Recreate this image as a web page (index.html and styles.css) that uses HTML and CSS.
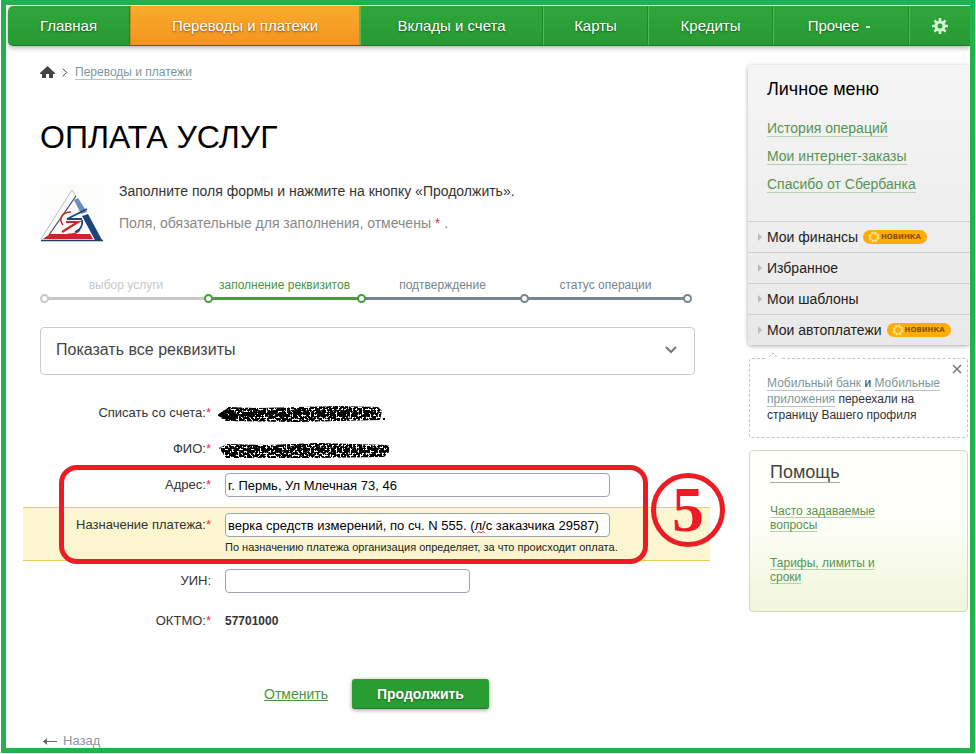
FILE: index.html
```html
<!DOCTYPE html>
<html lang="ru">
<head>
  <meta charset="UTF-8">
  <meta name="viewport" content="width=device-width, initial-scale=1">
  <title>Оплата услуг</title>
  <link rel="stylesheet" href="styles.css">
</head>
<body>
  <div class="frame">

    <nav class="topnav">
      <a href="#">Главная</a>
      <a href="#" class="active">Переводы и платежи</a>
      <a href="#">Вклады и счета</a>
      <a href="#">Карты</a>
      <a href="#">Кредиты</a>
      <a href="#">Прочее <span class="more"></span></a>
      <a href="#" aria-label="Настройки">
        <svg width="16" height="16" viewBox="0 0 16 16">
          <g stroke="#d6f2d4" stroke-width="2.6">
            <path d="M8 0v4M8 12v4M0 8h4M12 8h4M2.4 2.4l2.8 2.8M10.8 10.8l2.8 2.8M13.6 2.4l-2.8 2.8M5.2 10.8l-2.8 2.8"/>
          </g>
          <circle cx="8" cy="8" r="4" fill="none" stroke="#d6f2d4" stroke-width="3"/>
        </svg>
      </a>
    </nav>

    <div class="page">
      <main class="content">
        <div class="inner">
          <div class="crumbs">
            <a href="#" class="home" aria-label="Главная">
              <svg width="15" height="12" viewBox="0 0 15 12"><path fill="#444" d="M7.5 0L15 7v1h-2v4H9V8H6v4H2V8H0V7z"/></svg>
            </a>
            <svg width="6" height="9" viewBox="0 0 6 9"><path d="M.7.5l4 4-4 4" fill="none" stroke="#444"/></svg>
            <a href="#" class="crumb">Переводы и платежи</a>
          </div>

          <h1>ОПЛАТА УСЛУГ</h1>

          <div class="intro">
            <svg class="logo" width="64" height="62" viewBox="0 0 64 62">
              <rect width="64" height="62" fill="#fcfcfa"/>
              <path d="M1 56L32 7l4 6" fill="none" stroke="#aaa" stroke-width=".8"/>
              <path d="M36 13L9 52" fill="none" stroke="#445" stroke-width="1.200"/>
              <path d="M3 56l7-5h40l3 5z" fill="#c9252c"/>
              <path d="M34 17l4-2 9 14-6 2z" fill="#6a8fb8"/>
              <path d="M42 33l6-2 14 26h-7z" fill="#17457c"/>
              <path d="M1 57.500h62" stroke="#1c3c66" stroke-width="1.600"/>
              <path d="M31 29c-9 0-13 7-8 13M28 51c6 1 9-1 12-4" fill="none" stroke="#c9252c" stroke-width="1.500"/>
              <path d="M47 26L27 36h15M42 37c1 6-2 10-7 12" fill="none" stroke="#17457c" stroke-width="1.800"/>
              <path d="M26 39h12L22 49" fill="none" stroke="#c9252c" stroke-width="2.200"/>
            </svg>
            <div>
              <p>Заполните поля формы и нажмите на кнопку «Продолжить».</p>
              <p class="muted">Поля, обязательные для заполнения, отмечены <span class="req">*</span> .</p>
            </div>
          </div>

          <ol class="steps">
            <li class="done">выбор услуги</li>
            <li class="current">заполнение реквизитов</li>
            <li>подтверждение</li>
            <li>статус операции</li>
          </ol>

          <button type="button" class="details">
            <span>Показать все реквизиты</span>
            <svg width="12" height="8" viewBox="0 0 12 8"><path d="M1 1l5 5 5-5" fill="none" stroke="#777" stroke-width="2"/></svg>
          </button>
        </div>

        <form>
          <div class="row">
            <span class="label">Списать со счета:<span class="req">*</span></span>
            <!-- hidden personal data -->
            <svg class="scribble" width="170" height="18" viewBox="0 0 170 18">
              <filter id="noise" x="0" y="0" width="174" height="18" filterUnits="userSpaceOnUse">
                <feTurbulence type="fractalNoise" baseFrequency="0.5" numOctaves="2" seed="4"/>
                <feColorMatrix values="0 0 0 0 0  0 0 0 0 0  0 0 0 0 0  14 0 0 0 -6" result="n"/>
                <feComposite in="n" in2="SourceGraphic" operator="in"/>
              </filter>
              <path filter="url(#noise)" d="M1 9l9-7 30 1 80-2 40 1 4 4-2 9-80 2-74-1-5-3z"/>
              <path d="M3 10l6-4 8 4-8 3zM24 9h12" fill="none" stroke="#000" stroke-width="4"/>
              <path d="M40 9l116-1" fill="none" stroke="#000" stroke-width="6" stroke-dasharray="3 4 1 3 4 2 2 5"/>
              <path d="M165 13h2v2h-2z"/>
            </svg>
          </div>
          <div class="row">
            <span class="label">ФИО:<span class="req">*</span></span>
            <svg class="scribble" width="174" height="18" viewBox="0 0 174 18">
              <path filter="url(#noise)" d="M1 7l8-4 40 1 50-2 72 2v7l-5 5-70 1H8z"/>
              <path d="M10 9h158" fill="none" stroke="#000" stroke-width="5" stroke-dasharray="2 4 3 6 1 3 4 5"/>
            </svg>
          </div>

          <div class="marked">
            <div class="row">
              <label for="address">Адрес:<span class="req">*</span></label>
              <input type="text" id="address" value="г. Пермь, Ул Млечная 73, 46">
            </div>
            <div class="row highlight">
              <label for="purpose">Назначение платежа:<span class="req">*</span></label>
              <div class="field">
                <input type="text" id="purpose" value="верка средств измерений, по сч. N 555. (л/с заказчика 29587)">
                <svg class="typo" width="8" height="3" viewBox="0 0 8 3"><path d="M0 2l2-1.500 2 1.500 2-1.500 2 1.500" fill="none" stroke="#e33"/></svg>
                <p class="hint">По назначению платежа организация определяет, за что происходит оплата.</p>
              </div>
            </div>
            <div class="outline"></div>
            <div class="number">5</div>
          </div>

          <div class="row">
            <label for="uin">УИН:</label>
            <input type="text" id="uin" class="short">
          </div>
          <div class="row last">
            <span class="label">ОКТМО:<span class="req">*</span></span>
            <b class="value">57701000</b>
          </div>

          <div class="actions">
            <a href="#">Отменить</a>
            <button type="submit">Продолжить</button>
          </div>
        </form>

        <a href="#" class="back">
          <svg width="14" height="8" viewBox="0 0 14 8"><path d="M14 4.500H2" stroke="#666"/><path d="M0 4.500l4-3.500v7z" fill="#666"/></svg>
          Назад
        </a>
      </main>

      <aside class="sidebar">
        <section class="menu">
          <h2>Личное меню</h2>
          <ul class="links">
            <li><a href="#">История операций</a></li>
            <li><a href="#">Мои интернет-заказы</a></li>
            <li><a href="#">Спасибо от Сбербанка</a></li>
          </ul>
          <ul class="groups">
            <li><a href="#">Мои финансы</a>
              <span class="new"><svg width="12" height="12" viewBox="0 0 12 12"><circle cx="6" cy="6" r="4.500" fill="none" stroke="#ffe48a" stroke-width="2" stroke-dasharray="2.300 1.200"/><circle cx="6" cy="6" r="3.500" fill="none" stroke="#ffe48a"/></svg>НОВИНКА</span>
            </li>
            <li><a href="#">Избранное</a></li>
            <li><a href="#">Мои шаблоны</a></li>
            <li><a href="#">Мои автоплатежи</a>
              <span class="new"><svg width="12" height="12" viewBox="0 0 12 12"><circle cx="6" cy="6" r="4.500" fill="none" stroke="#ffe48a" stroke-width="2" stroke-dasharray="2.300 1.200"/><circle cx="6" cy="6" r="3.500" fill="none" stroke="#ffe48a"/></svg>НОВИНКА</span>
            </li>
          </ul>
        </section>

        <section class="note">
          <svg class="tip" width="16" height="8" viewBox="0 0 16 8"><path d="M0 7h16" stroke="#fff" stroke-width="2"/><path d="M4 5l4-4 4 4" fill="none" stroke="#c4c4c4" stroke-dasharray="3 1"/></svg>
          <button type="button" class="close" aria-label="Закрыть">
            <svg width="10" height="10" viewBox="0 0 10 10"><path d="M1 1l8 8M9 1L1 9" stroke="#777" stroke-width="1.500"/></svg>
          </button>
          <p><a href="#">Мобильный банк</a> и <a href="#">Мобильные приложения</a> переехали на страницу Вашего профиля</p>
        </section>

        <section class="help">
          <h2><a href="#">Помощь</a></h2>
          <p><a href="#">Часто задаваемые вопросы</a></p>
          <p><a href="#">Тарифы, лимиты и сроки</a></p>
        </section>
      </aside>
    </div>

  </div>
</body>
</html>
```
FILE: styles.css
```css
* {
  box-sizing: border-box;
}

body {
  margin: 0;
  font-family: "Liberation Sans", Arial, sans-serif;
  font-size: 13px;
  color: #333;
  background: #fff;
}

h1, h2, p, ul, ol {
  margin: 0;
  padding: 0;
  font-weight: normal;
}

ul, ol {
  list-style: none;
}

button {
  font-family: inherit;
  cursor: pointer;
}

.frame {
  margin: 0 1px 1px;
  border: 5px solid #22b14c;
  overflow: hidden;
}

/* top navigation */
.topnav {
  display: grid;
  grid-template-columns: 122fr 230fr 183fr 105fr 125fr 136fr 61fr;
  height: 40px;
  margin: 1px 0 0 2px;
  border-radius: 5px 0 0 5px;
  overflow: hidden;
  background: linear-gradient(#2fa63c, #289a33);
  border-bottom: 1px solid #1d7a28;
  box-shadow: 0 2px 5px rgba(0, 0, 0, 0.3);
}

.topnav a {
  display: flex;
  align-items: center;
  justify-content: center;
  color: #fff;
  font-size: 15px;
  text-decoration: none;
  text-shadow: 0 1px 2px rgba(0, 0, 0, 0.5);
  border-left: 1px solid #52b95b;
  border-right: 1px solid #1f8a2c;
}

.topnav a:first-child {
  border-left: none;
}

.topnav a:last-child {
  border-right: none;
}

.topnav .active {
  background: linear-gradient(#f8ab2a, #f49421);
  border-color: #c98a1c;
}

.more {
  width: 4px;
  height: 2px;
  margin: 2px 4px 0 7px;
  background: #d6f2d4;
}

/* columns */
.page {
  display: grid;
  grid-template-columns: 1fr 222px;
  gap: 38px;
  padding-left: 17px;
}

.inner {
  padding: 0 15px 0 17px;
}

.crumbs {
  display: flex;
  align-items: center;
  gap: 7px;
  height: 16px;
  margin-top: 18px;
}

.home {
  display: flex;
}

.crumb {
  color: #7d979b;
  font-size: 12px;
  text-decoration: none;
  border-bottom: 1px solid #b4c3c6;
}

h1 {
  margin-top: 37px;
  font-size: 32px;
  line-height: 40px;
  color: #000;
}

.intro {
  display: flex;
  gap: 15px;
  margin-top: 26px;
  font-size: 14px;
}

.intro p {
  line-height: 16px;
  margin-bottom: 16px;
}

.intro .muted {
  color: #888;
}

.req {
  color: #d9333f;
}

/* payment steps */
.steps {
  display: grid;
  grid-template-columns: 164fr 153fr 163fr 163fr;
  margin: 30px 8px 0 4px;
}

.steps li {
  position: relative;
  height: 23px;
  border-bottom: 3px solid #76858f;
  color: #76858f;
  font-size: 12px;
  line-height: 16px;
  text-align: center;
}

.steps li::before,
.steps li:last-child::after {
  content: "";
  position: absolute;
  left: -4px;
  bottom: -6px;
  width: 5px;
  height: 5px;
  border: 2px solid #76858f;
  border-radius: 50%;
  background: #fff;
}

.steps li:last-child::after {
  left: auto;
  right: -5px;
}

.steps .done {
  color: #c8c8c8;
  border-color: #c8c8c8;
}

.steps .done::before {
  border-color: #c8c8c8;
}

.steps .current {
  color: #4b9440;
  border-color: #4b9a3c;
}

.steps .current::before,
.steps .current + li::before {
  border-color: #4b9a3c;
}

.details {
  display: flex;
  align-items: center;
  justify-content: space-between;
  width: 100%;
  height: 48px;
  margin-top: 27px;
  padding: 0 17px 2px 15px;
  border: 1px solid #ccc;
  border-radius: 4px;
  background: #fff;
  color: #444;
  font-size: 16px;
}

/* form */
form {
  margin-top: 20px;
}

.row {
  display: grid;
  grid-template-columns: 188px 1fr;
  column-gap: 14px;
  align-items: start;
  padding: 6px 0;
}

.row label,
.row .label {
  line-height: 24px;
  text-align: right;
}

.scribble {
  margin: 4px 0 0 -7px;
}

.row input {
  width: 385px;
  height: 24px;
  padding: 0 2px;
  border: 1px solid #9aa5b1;
  border-radius: 4px;
  background: #fff;
  color: #000;
  font-family: inherit;
  font-size: 13px;
}

.row .short {
  width: 245px;
}

.row.last {
  padding-top: 10px;
}

.value {
  font-size: 12px;
  line-height: 24px;
}

.marked {
  position: relative;
}

.highlight {
  margin: 4px 0 2px;
  padding: 5px 0;
  background: #fbf6cf;
  border-top: 1px solid #e6ce5c;
  border-bottom: 1px solid #e6ce5c;
}

.field {
  position: relative;
  width: 385px;
}

.typo {
  position: absolute;
  right: 125px;
  top: 18px;
}

.hint {
  margin-top: 2px;
  color: #222;
  font-size: 11px;
  line-height: 16px;
  white-space: nowrap;
}

.outline {
  position: absolute;
  left: 36px;
  right: 62px;
  top: -2px;
  bottom: -3px;
  border: 5px solid #ed1c24;
  border-radius: 18px;
}

.number {
  position: absolute;
  right: -15px;
  top: 6px;
  width: 74px;
  height: 74px;
  border: 5px solid #ed1c24;
  border-radius: 50%;
  color: #ed1c24;
  font: bold 64px/64px "Liberation Serif", "Times New Roman", serif;
  text-align: center;
}

.actions {
  display: flex;
  align-items: center;
  gap: 24px;
  margin: 40px 0 0 241px;
}

.actions a {
  color: #4b9440;
  font-size: 14px;
}

.actions button {
  width: 137px;
  height: 30px;
  border: none;
  border-bottom: 1px solid #1d7a28;
  border-radius: 3px;
  background: #2a9d32;
  color: #fff;
  font-size: 14px;
  font-weight: bold;
  text-shadow: 0 1px 2px rgba(0, 0, 0, 0.4);
  box-shadow: 0 1px 4px rgba(0, 0, 0, 0.4);
}

.back {
  display: flex;
  align-items: center;
  gap: 6px;
  margin: 24px 0 0 20px;
  color: #8796a0;
  font-size: 13px;
  line-height: 15px;
  text-decoration: none;
}

/* sidebar */
.sidebar {
  margin-top: 19px;
}

.sidebar a {
  text-decoration: none;
}

.menu {
  border-radius: 4px;
  background: linear-gradient(#f5f5f5, #e9e9e9);
  box-shadow: 0 1px 4px rgba(0, 0, 0, 0.35);
}

.menu h2 {
  padding: 14px 19px 0;
  color: #000;
  font-size: 18px;
  line-height: 20px;
}

.links {
  padding: 15px 19px 23px;
  font-size: 14px;
}

.links li {
  height: 28px;
  line-height: 28px;
}

.links a {
  color: #569451;
  border-bottom: 1px solid #b3d3ad;
}

.groups li {
  display: flex;
  align-items: center;
  height: 31px;
  padding-left: 10px;
  border-top: 1px solid #d0d0d0;
  font-size: 14px;
}

.groups li::before {
  content: "";
  margin-right: 5px;
  border: 4px solid transparent;
  border-left-color: #bbb;
  border-right: none;
}

.groups a {
  color: #222;
}

.new {
  display: flex;
  align-items: center;
  gap: 1px;
  height: 14px;
  margin-left: 5px;
  padding: 0 6px 0 5px;
  border-radius: 7px;
  background: #fdac08;
  color: #8a5200;
  font: bold 7px "DejaVu Sans", sans-serif;
}

.note {
  position: relative;
  margin: 13px 2px 0 1px;
  padding: 16px 18px 14px 17px;
  border: 1px dashed #c4c4c4;
  border-radius: 3px;
  font-size: 12px;
  line-height: 16px;
}

.note a {
  color: #7d979b;
  text-decoration: underline 1px #b4c3c6;
  text-underline-offset: 3px;
}

.tip {
  position: absolute;
  left: 15px;
  top: -7px;
}

.close {
  position: absolute;
  right: 5px;
  top: 5px;
  display: flex;
  padding: 0;
  border: none;
  background: none;
}

.help {
  margin: 12px 2px 0 1px;
  padding: 11px 80px 27px 20px;
  border: 1px solid #d3d9c0;
  border-radius: 4px;
  background: linear-gradient(#fffffa 40%, #f0f6da);
}

.help h2 {
  margin-bottom: 22px;
  font-size: 18px;
  line-height: 20px;
}

.help h2 a {
  color: #444;
  border-bottom: 1px solid #aaa;
}

.help p {
  font-size: 12px;
  line-height: 14px;
}

.help p + p {
  margin-top: 24px;
}

.help p a {
  color: #569451;
  text-decoration: underline 1px #b3d3ad;
  text-underline-offset: 2px;
}
```
